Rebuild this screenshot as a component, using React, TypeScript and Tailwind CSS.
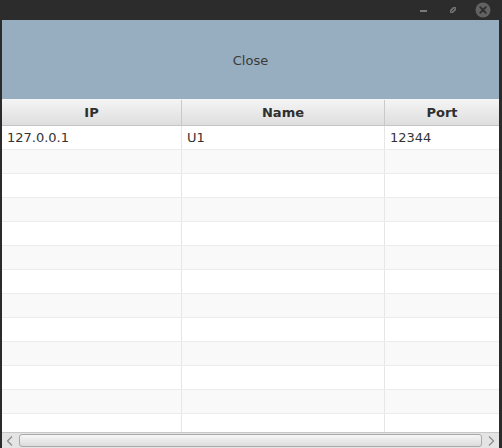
import React from 'react';

type Row = { ip: string; name: string; port: string };

const rows: Row[] = [{ ip: '127.0.0.1', name: 'U1', port: '12344' }];
const TOTAL_ROWS = 13;

const font = { fontFamily: '"DejaVu Sans", Verdana, sans-serif' };

const TitleBar: React.FC = () => (
  <div className="flex h-[20px] items-center justify-end bg-[#2c2c2c] pr-[11px]">
    <svg width="10" height="10" viewBox="0 0 10 10" className="mr-[19px]">
      <rect x="1" y="5" width="7" height="2" fill="#7a7a7a" />
    </svg>
    <svg width="10" height="10" viewBox="0 0 10 10" className="mr-[17px]">
      <path d="M2 5 L5 2 L8 2 L8 5 L5 8 L2 8 Z" fill="#6f6f6f" />
      <path d="M3.5 6.5 L6.5 3.5" stroke="#2c2c2c" strokeWidth="1" />
    </svg>
    <svg width="16" height="16" viewBox="0 0 16 16">
      <circle cx="8" cy="8" r="7.5" fill="#626262" />
      <path d="M5.2 5.2 L10.8 10.8 M10.8 5.2 L5.2 10.8" stroke="#2e2e2e" strokeWidth="1.8" strokeLinecap="round" />
    </svg>
  </div>
);

const HeaderCell: React.FC<{ label: string; className: string }> = ({ label, className }) => (
  <div
    className={`flex items-center justify-center border-r border-[#c9c9c9] text-[13px] font-bold text-[#2f2f2f] ${className}`}
  >
    {label}
  </div>
);

const Cell: React.FC<{ text?: string; className: string }> = ({ text, className }) => (
  <div className={`flex items-center border-r border-[#e6e6e6] pl-[5px] text-[13px] text-[#333] ${className}`}>
    {text}
  </div>
);

const App: React.FC = () => {
  const filled: (Row | null)[] = Array.from({ length: TOTAL_ROWS }, (_, i) => rows[i] ?? null);

  return (
    <div className="flex h-[448px] w-[502px] flex-col overflow-hidden bg-[#2b2b2b]" style={font}>
      <TitleBar />
      <div className="flex flex-1 flex-col overflow-hidden ml-[2px] mr-[3px] bg-white">
        <button className="h-[79px] shrink-0 bg-[#97adc0] pt-[2px] text-[13px] text-[#3a3a3a]">Close</button>

        <div className="flex h-[27px] shrink-0 border-t border-[#f2f5f8] border-b border-b-[#c4c4c4] bg-gradient-to-b from-[#f4f4f4] to-[#dedede]">
          <HeaderCell label="IP" className="w-[180px]" />
          <HeaderCell label="Name" className="w-[203px]" />
          <HeaderCell label="Port" className="flex-1 border-r-0" />
        </div>

        <div className="flex-1 overflow-hidden">
          {filled.map((row, i) => (
            <div
              key={i}
              className={`flex h-[24px] border-b border-[#ececec] ${i % 2 === 1 ? 'bg-[#f9f9f9]' : 'bg-white'}`}
            >
              <Cell text={row?.ip} className="w-[180px]" />
              <Cell text={row?.name} className="w-[203px]" />
              <Cell text={row?.port} className="flex-1 border-r-0" />
            </div>
          ))}
        </div>

        <div className="flex h-[16px] shrink-0 items-center border-t border-[#c8c8c8] bg-[#e4e4e4] px-[3px]">
          <svg width="10" height="12" viewBox="0 0 10 12" className="mr-[4px]">
            <path d="M7 1.5 L2.5 6 L7 10.5" fill="none" stroke="#8a8a8a" strokeWidth="1.2" />
          </svg>
          <div className="h-[13px] flex-1 rounded-[3px] border border-[#a9a9a9] bg-gradient-to-b from-[#f6f6f6] to-[#dcdcdc]" />
          <svg width="10" height="12" viewBox="0 0 10 12" className="ml-[4px]">
            <path d="M3 1.5 L7.5 6 L3 10.5" fill="none" stroke="#8a8a8a" strokeWidth="1.2" />
          </svg>
        </div>
      </div>
    </div>
  );
};

export default App;
